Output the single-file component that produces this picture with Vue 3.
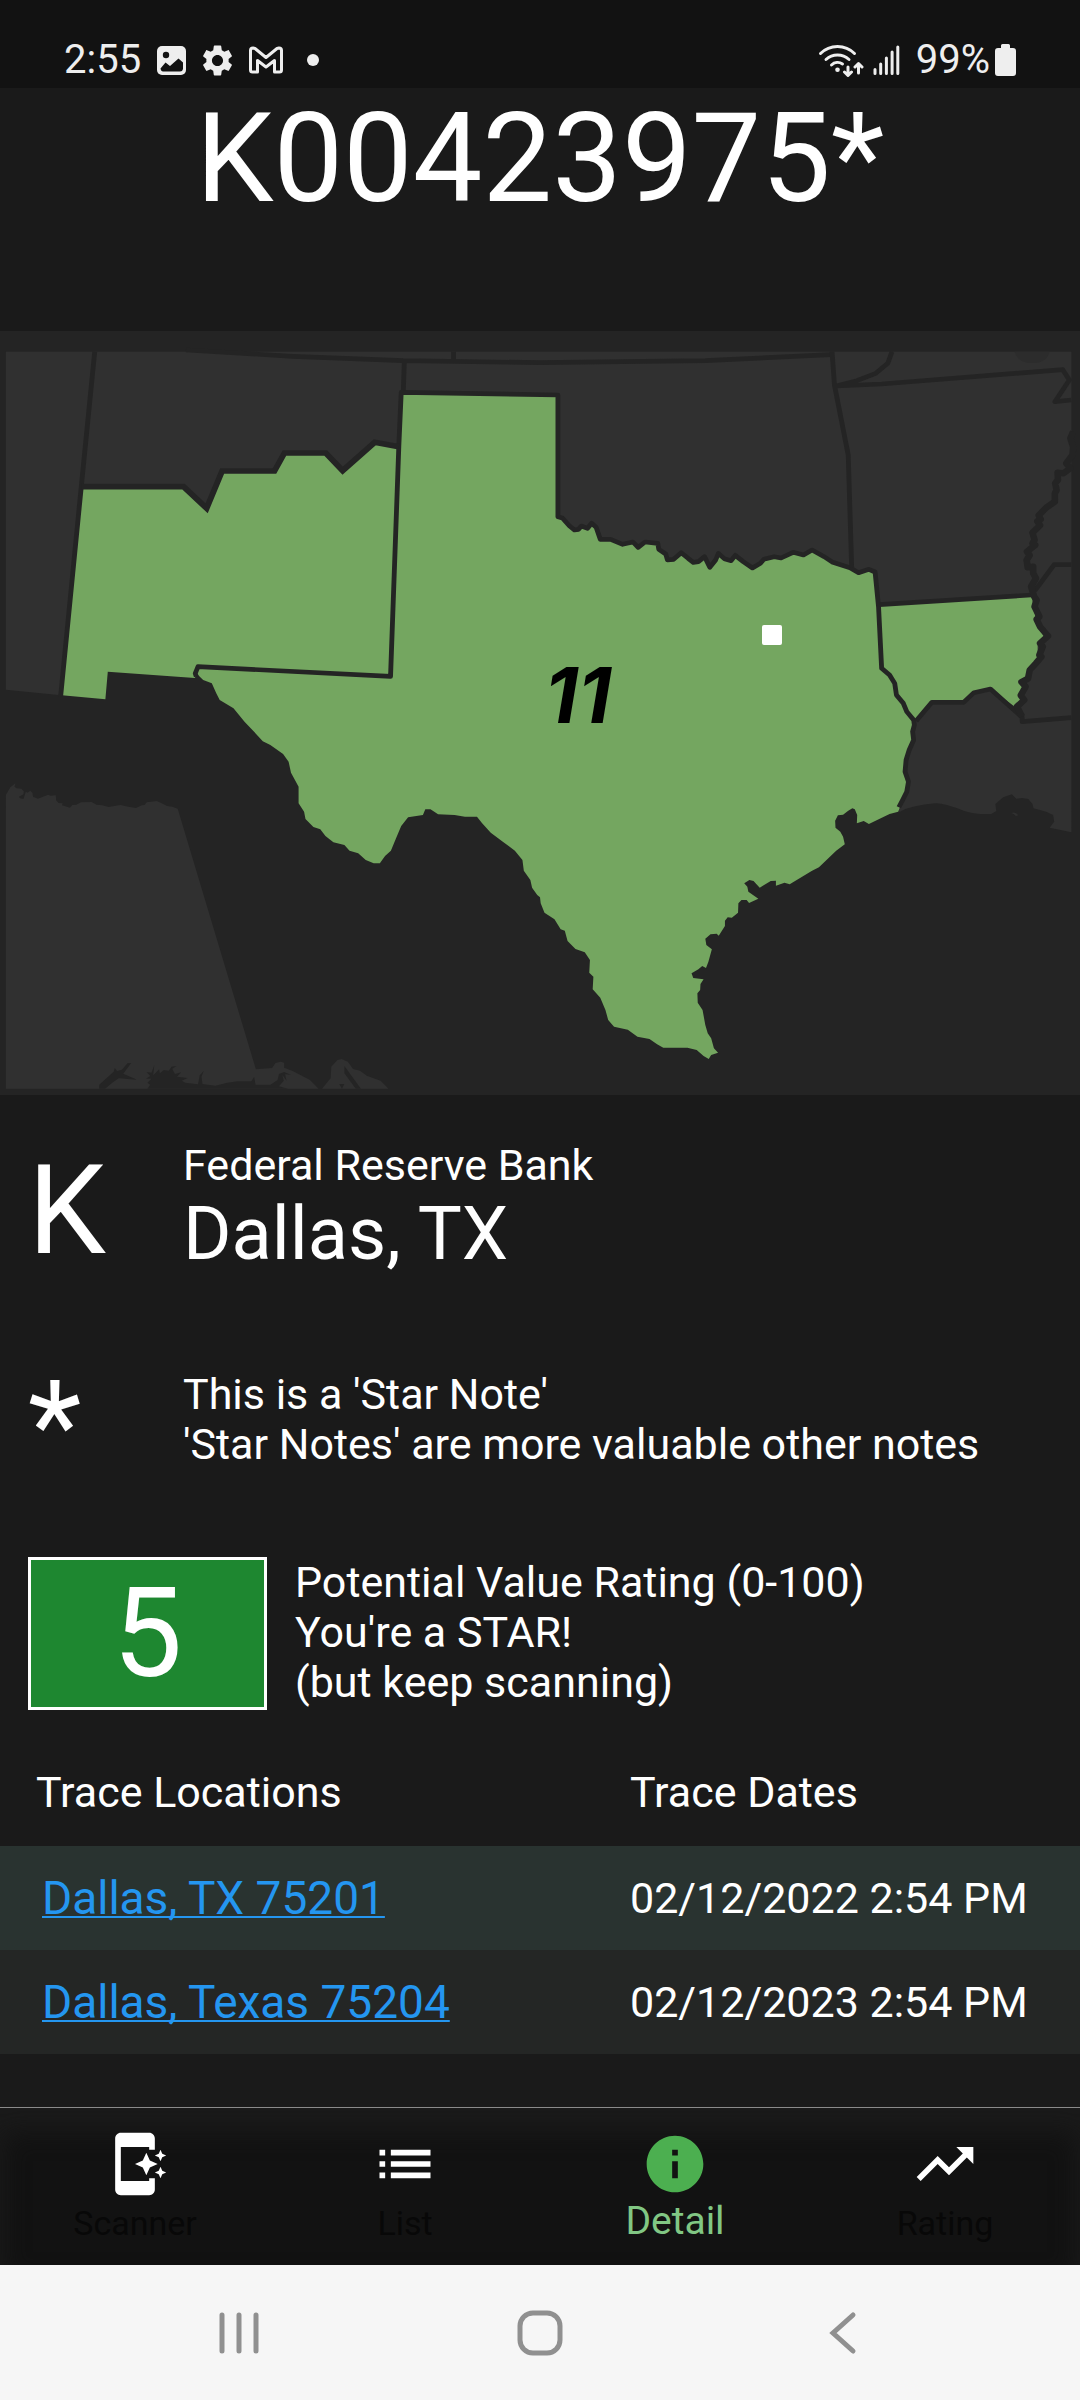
<script setup>
const traces = [
  { place: 'Dallas, TX 75201', date: '02/12/2022 2:54 PM' },
  { place: 'Dallas, Texas 75204', date: '02/12/2023 2:54 PM' },
]

const tabs = [
  {
    label: 'Scanner',
    icon: 'M17 18H7V6h10v1h2V3c0-1.100-.9-2-2-2H7C5.900 1 5 1.900 5 3v18c0 1.100.9 2 2 2h10c1.100 0 2-.9 2-2v-4h-2zM16 16l-1.250-2.750L12 12l2.750-1.250L16 8l1.250 2.750L20 12l-2.750 1.250zM21 11l-.62-1.380L19 9l1.380-.62L21 7l.62 1.380L23 9l-1.380.62zM21 17l-.62-1.380L19 15l1.380-.62L21 13l.62 1.380L23 15l-1.380.62z',
  },
  {
    label: 'List',
    icon: 'M3 13h2v-2H3zm0 4h2v-2H3zm0-8h2V7H3zm4 4h14v-2H7zm0 4h14v-2H7zM7 7v2h14V7z',
  },
  {
    label: 'Detail',
    active: true,
    icon: 'M12 2C6.480 2 2 6.480 2 12s4.480 10 10 10 10-4.480 10-10S17.520 2 12 2zm1 15h-2v-6h2zm0-8h-2V7h2z',
  },
  {
    label: 'Rating',
    icon: 'M16 6l2.290 2.290-4.880 4.880-4-4L2 16.590 3.410 18l6-6 4 4 6.300-6.290L22 12V6z',
  },
]
</script>

<template>
  <div class="screen">
    <header class="status">
      <div class="status-side">
        <span class="status-text">2:55</span>
        <svg class="st-img" viewBox="0 0 29 29" aria-hidden="true">
          <rect width="29" height="29" rx="5" />
          <g class="cut">
            <circle cx="9" cy="9" r="3.200" />
            <path d="M3.500 22.500l5-6 4.500 3.500 8.500-7.500 4.500 4v6.500q-.5 2.500-3 2.500H6q-2 0-2.500-3z" />
          </g>
        </svg>
        <svg class="st-gear" viewBox="2 2 20 20" aria-hidden="true">
          <path fill-rule="evenodd" d="M19.140 12.940c.04-.3.06-.61.06-.94 0-.32-.02-.64-.07-.94l2.030-1.580c.18-.14.23-.41.12-.61l-1.920-3.320c-.12-.22-.37-.29-.59-.22l-2.390.96c-.5-.38-1.030-.7-1.620-.94l-.36-2.540c-.04-.24-.24-.41-.48-.41h-3.840c-.24 0-.43.17-.47.41l-.36 2.540c-.59.24-1.130.57-1.620.94l-2.390-.96c-.22-.08-.47 0-.59.22L2.740 8.870c-.12.21-.08.47.12.61l2.030 1.580c-.05.3-.09.63-.09.94s.02.64.07.94l-2.030 1.580c-.18.14-.23.41-.12.61l1.920 3.320c.12.22.37.29.59.22l2.390-.96c.5.38 1.030.7 1.620.94l.36 2.540c.05.24.24.41.48.41h3.840c.24 0 .44-.17.47-.41l.36-2.540c.59-.24 1.130-.56 1.620-.94l2.390.96c.22.08.47 0 .59-.22l1.920-3.320c.12-.22.07-.47-.12-.61zM12 15.600c-1.980 0-3.600-1.620-3.600-3.600s1.620-3.600 3.600-3.600 3.600 1.620 3.600 3.600-1.620 3.600-3.600 3.600z" />
        </svg>
        <svg class="st-mail" viewBox="0 0 34 28" aria-hidden="true">
          <path class="line" d="M1.500 4.500Q1.500 2 4 2l2 .5 11 9 11-9 2-.5q2.500 0 2.500 2.500V24q0 2-2 2h-5V14.500l-8.500 6.500-8.500-6.500V26h-5q-2 0-2-2z" />
        </svg>
        <span class="dot"></span>
      </div>
      <div class="status-side right">
        <svg class="st-wifi" viewBox="0 0 46 34" aria-hidden="true">
          <g class="line">
            <path d="M2.500 10.500A24 24 0 0 1 36.500 10.500M8 16.500A17 17 0 0 1 31 16.500M13.500 22A9 9 0 0 1 24.500 21" />
            <path d="M30 24v7M26.500 29l3.500 3.500 3.500-3.500M40.500 30v-8M37 24l3.500-3.500L44 24" />
          </g>
          <circle cx="19.500" cy="26.800" r="2.300" />
        </svg>
        <svg class="st-signal" viewBox="0 0 28 30" aria-hidden="true">
          <path class="line" d="M2 24.500v4M7.700 19v9.500M13.400 13v15.500M19.100 7v21.500M24.800 2v26.500" />
        </svg>
        <span class="status-text">99%</span>
        <svg class="st-battery" viewBox="0 0 21 32" aria-hidden="true">
          <path d="M6 1.500Q6 0 7.500 0h6Q15 0 15 1.500V4h3q3 0 3 3v22q0 3-3 3H3q-3 0-3-3V7q0-3 3-3h3z" />
        </svg>
      </div>
    </header>

    <main class="content">
      <h1 class="serial">K00423975*</h1>

      <svg class="map" viewBox="0 0 1080 764" role="img" aria-label="Map of Federal Reserve district 11">
        <g transform="translate(0 -1) scale(.34439 .33333)">
          <!-- United States land -->
          <path class="land" d="M17 65H3111V1507L3048 1493 3061 1475 3058 1455 3038 1445 3001 1435 2998 1422 2986 1407 2968 1404 2951 1406 2938 1393 2913 1402 2890 1422 2893 1443 2878 1452Q2830 1454 2800 1443 2740 1418 2715 1420 2650 1425 2613 1445L1200 1000 600 900 240 900 170 1095 17 1079z" />
          <path class="land" d="M2936 1449q14-5 20 7l-6 2q-6-8-14-9z" />
          <path class="faint" d="M2946 65q8 33 50 34t52-34z" />
          <!-- Mexico -->
          <path class="land" d="M17 1395L30 1372 45 1360 42 1370 48 1375 62 1376 69 1384 68 1393 55 1400 58 1405 68 1407 75 1385 80 1388 88 1382 94 1388 96 1400 110 1406 140 1394 146 1397 162 1396 163 1411 170 1419 182 1420 180 1426 203 1433 210 1425 222 1424 235 1417 266 1416 280 1424 297 1426 315 1431 350 1425 372 1430 395 1434 412 1426 420 1425 426 1417 455 1413 468 1419 485 1428 500 1430 516 1436 743 2218 790 2214 800 2199 815 2195 825 2198 825 2213 850 2223 900 2250 925 2276H17z" />
          <path class="land" d="M935 2276L960 2245 962 2210 980 2190 992 2187 1010 2195 1025 2217 1045 2222 1065 2237 1105 2252 1128 2276z" />
          <path class="sea" d="M288 2276V2264L330 2225 333 2214 340 2223 354 2219 370 2200 381 2199 358 2231 398 2249 345 2245 328 2257 305 2276zM428 2276L436 2264 428 2258 440 2246 424 2246 436 2238 426 2226 440 2228 448 2205 445 2236 462 2218 464 2230 476 2220 490 2222 498 2210 513 2208 500 2216 508 2232 526 2227 514 2240 545 2244 528 2252 538 2258 575 2263 580 2236 592 2222 585 2240 588 2262 625 2267 660 2258 690 2254 730 2254 738 2240 742 2264H785L806 2250 810 2232 825 2226 845 2234 828 2233 832 2252 820 2235 824 2252 810 2269 836 2276zM1000 2208L1048 2276H1033L1000 2230zM985 2262H1000L993 2276z" />

          <!-- Eleventh district -->
          <g class="district">
            <path d="M240 475H532L601 545 648 427H799L828 372H944L995 430 1089 341 1158 352 1134 1040 578 1010 566 1044 313 1025 306 1108 180 1096z" />
            <path d="M1167 187L1620 197V563L1633 564 1653 587 1668 600 1680 598 1688 588 1706 595 1718 580 1731 592 1743 628H1773L1808 643 1838 636 1853 652 1873 636 1910 640 1913 658 1933 672 1938 690 1956 688 1978 668 1998 685 2013 697 2028 695 2046 680 2061 712 2078 690 2086 670 2103 686 2123 692 2135 676 2158 695 2185 714 2208 700 2218 688 2248 680 2268 684 2303 667 2333 675 2358 660 2393 680 2418 697 2468 713 2493 728 2523 718 2541 726 2551 830 2560 1015 2583 1035 2598 1060 2603 1095 2623 1120 2633 1145 2653 1170 2655 1185 2650 1205 2653 1230 2640 1260 2631 1290 2628 1325 2638 1355 2633 1385 2621 1410 2608 1445 2583 1452 2523 1482 2508 1473 2488 1480 2489 1455 2482 1438 2475 1435 2463 1442 2448 1454 2433 1456 2425 1472 2426 1493 2440 1505 2448 1520 2453 1543 2428 1562 2378 1612 2358 1622 2293 1663 2278 1658 2253 1667V1652L2238 1653 2206 1673 2188 1653 2176 1650 2161 1660 2170 1670 2173 1685 2202 1706 2175 1719 2168 1710H2153L2144 1720 2143 1748 2125 1763 2113 1762 2105 1772V1788L2087 1817 2081 1811 2063 1813 2048 1826 2051 1845 2067 1858 2057 1895 2050 1914 2039 1908 2028 1918 2008 1930 2013 1944 2043 1948 2034 1962 2033 1980 2025 1990 2026 2018 2040 2040 2048 2085 2055 2110 2065 2125 2073 2155 2085 2168 2065 2175 2058 2187 2043 2178 2023 2160 1996 2153H1926L1908 2143 1886 2127 1851 2120 1823 2099 1783 2090 1766 2070 1758 2040 1743 2003 1721 1978 1723 1940 1711 1928 1713 1890 1698 1867 1671 1857 1648 1833 1640 1802 1628 1798 1610 1768 1581 1748 1570 1720 1568 1702 1560 1695 1545 1673 1540 1650 1521 1622 1517 1590 1495 1562 1460 1535 1425 1508 1400 1480 1385 1460 1350 1460 1320 1455 1272 1453 1250 1438H1235L1228 1455 1185 1462 1165 1488 1150 1525 1135 1562 1118 1578 1103 1600H1085L1062 1590 1040 1570 1015 1562 1000 1545 968 1537 945 1518 930 1498 910 1491 887 1467 883 1445 867 1420V1370L845 1328 838 1295 822 1272 785 1245 763 1234 735 1202 710 1175 678 1135 638 1110 628 1090 615 1060 590 1050 575 1035 567 1025 575 1010 1134 1038z" />
            <path d="M2553 825L2995 796 3003 840 3008 870 3018 895 3034 925 3013 945V985L2990 1010 2978 1040 2973 1075 2963 1110 2953 1135 2876 1078 2830 1088 2800 1115H2706L2658 1173 2633 1145 2603 1095 2598 1060 2560 1015z" />
          </g>

          <!-- State lines -->
          <g class="border">
            <path d="M275 65L236 470 176 1100M540 60L850 79 1170 92 1568 98 2048 92 2413 74M1317 65V92M1174 95L1171 187" />
            <path d="M570 1040L567 1030 571 1020 575 1010 1134 1039 1158 350 1165 187 1620 195V560L1633 564 1653 587 1668 600 1680 598 1688 588 1706 595 1718 580 1731 592 1743 628H1773L1808 643 1838 636 1853 652 1873 636 1910 640 1913 658 1933 672 1938 690 1956 688 1978 668 1998 685 2013 697 2028 695 2046 680 2061 712 2078 690 2086 670 2103 686 2123 692 2135 676 2158 695 2185 714 2208 700 2218 688 2248 680 2268 684 2303 667 2333 675 2358 660 2393 680 2418 697 2468 713 2493 728 2523 718 2541 726 2551 830 2560 1015 2583 1035 2598 1060 2603 1095 2623 1120 2633 1145 2653 1170 2655 1185 2650 1205 2653 1230 2640 1260 2631 1290 2628 1325 2638 1355 2633 1385 2621 1410 2610 1432" />
            <path d="M2416 65L2423 165 2463 375 2473 713M2590 65L2578 100 2543 130 2488 152 2428 168 2560 162 3086 119 3105 150 3063 215 3111 210M2553 824L2995 795M2660 1173L2706 1117H2798L2828 1088 2876 1077 2968 1162V1175L3111 1163M3005 782L3061 704H3111" />
            <path class="ridge" d="M236 470H533L600 535 645 423H797L826 369H946L995 422 1088 337 1158 350" />
            <path class="river" d="M3116 305L3108 325 3116 350 3114 375 3096 400 3108 415 3088 430 3071 428 3072 450 3064 460 3068 480 3063 490V515L3038 533 3016 556 3022 568 3012 574 3020 586 2998 608 3004 630 2998 640 3006 645 2982 665 2990 676 2981 690 2984 712 3000 710 3000 730 3008 745 2994 770 3003 800 3010 810 3004 830 3018 860 3010 868 3020 890 3043 918 3020 940 3028 950 3018 975 3024 980 3008 1000 2990 1020 2985 1046 2966 1056 2978 1070 2964 1096 2974 1110 2953 1130 2968 1160" />
          </g>
        </g>
        <rect class="pin" x="762" y="294" width="20" height="20" rx="2" />
        <text class="district-no" x="578" y="392" text-anchor="middle">11</text>
      </svg>

      <section class="fact">
        <span class="symbol">K</span>
        <div class="lines">
          <p>Federal Reserve Bank</p>
          <p class="city">Dallas, TX</p>
        </div>
      </section>

      <section class="fact star">
        <span class="symbol">*</span>
        <div class="lines">
          <p>This is a 'Star Note'</p>
          <p>'Star Notes' are more valuable other notes</p>
        </div>
      </section>

      <section class="rating">
        <div class="score">5</div>
        <div class="lines">
          <p>Potential Value Rating (0-100)</p>
          <p>You're a STAR!</p>
          <p>(but keep scanning)</p>
        </div>
      </section>

      <table class="traces">
        <thead>
          <tr>
            <th scope="col">Trace Locations</th>
            <th scope="col">Trace Dates</th>
          </tr>
        </thead>
        <tbody>
          <tr v-for="trace in traces" :key="trace.place">
            <td class="place"><a href="#">{{ trace.place }}</a></td>
            <td>{{ trace.date }}</td>
          </tr>
        </tbody>
      </table>
    </main>

    <nav class="tabs">
      <a v-for="tab in tabs" :key="tab.label" href="#" class="tab" :class="{ active: tab.active }">
        <svg viewBox="0 0 24 24" aria-hidden="true"><path :d="tab.icon" /></svg>
        <span>{{ tab.label }}</span>
      </a>
    </nav>

    <footer class="system">
      <button type="button" aria-label="Recent apps">
        <svg viewBox="0 0 48 48"><path d="M7 6v36M24 6v36M41 6v36" /></svg>
      </button>
      <button type="button" aria-label="Home">
        <svg viewBox="0 0 48 48"><rect x="4" y="4" width="40" height="40" rx="13" /></svg>
      </button>
      <button type="button" aria-label="Back">
        <svg viewBox="0 0 48 48"><path d="M36 6L16 24l20 18" /></svg>
      </button>
    </footer>
  </div>
</template>

<style>
body {
  margin: 0;
  background: #1a1a1a;
}
</style>

<style scoped>
.screen {
  display: flex;
  flex-direction: column;
  min-height: 100vh;
  background: #1a1a1a;
  color: #fff;
  font-family: Roboto, "Liberation Sans", sans-serif;
  font-size: 43px;
  line-height: 50px;
}

p,
h1 {
  margin: 0;
  font-weight: 400;
}

/* Status bar */
.status {
  display: flex;
  justify-content: space-between;
  padding: 32px 64px 0;
  background: #121212;
  color: #eee;
}

.status-side {
  display: flex;
  align-items: center;
  gap: 16px;
  height: 56px;
}

.status-side.right {
  gap: 9px;
}

.status-side.right .status-text {
  margin-left: 6px;
  margin-right: -4px;
}

.status-text {
  font-size: 40px;
  line-height: 48px;
}

.status svg {
  fill: #eee;
}

.status .line {
  fill: none;
  stroke: #eee;
  stroke-width: 3;
  stroke-linejoin: round;
  stroke-linecap: round;
}

.status .cut {
  fill: #121212;
}

.st-img {
  width: 29px;
  height: 29px;
}

.st-gear {
  width: 31px;
  height: 31px;
}

.st-mail {
  width: 34px;
  height: 28px;
}

.st-wifi {
  width: 46px;
  height: 34px;
}

.st-signal {
  width: 28px;
  height: 30px;
}

.st-battery {
  width: 21px;
  height: 32px;
}

.dot {
  width: 12px;
  height: 12px;
  margin-left: 8px;
  border-radius: 50%;
  background: #eee;
}

/* Content */
.content {
  flex: 1;
}

.serial {
  padding-bottom: 102px;
  font-size: 124px;
  line-height: 141px;
  text-align: center;
}

.map {
  display: block;
  width: 100%;
  background: #242424;
}

.land {
  fill: #303030;
}

.faint {
  fill: #2c2c2c;
}

.sea {
  fill: #242424;
}

.district {
  fill: #74a660;
}

.border {
  fill: none;
  stroke: #242424;
  stroke-width: 14;
  stroke-linejoin: round;
}

.border .ridge {
  stroke-width: 17;
  stroke-linejoin: miter;
}

.border .river {
  stroke-width: 19;
}

.pin {
  fill: #fff;
}

.district-no {
  fill: #000;
  font: italic 700 77px Inter, "Liberation Sans", sans-serif;
}

.fact {
  display: flex;
  align-items: flex-start;
  padding: 43px 28px 0;
}

.fact .lines {
  padding-top: 2px;
}

.symbol {
  width: 155px;
  font-size: 124px;
  line-height: 145px;
}

.city {
  font-size: 74px;
  line-height: 87px;
}

.star {
  padding-top: 71px;
}

.star .lines {
  padding-top: 15px;
}

.rating {
  display: flex;
  gap: 28px;
  padding: 58px 28px 0;
}

.score {
  box-sizing: border-box;
  width: 239px;
  border: 3px solid #fff;
  background: #1e8730;
  font-size: 124px;
  line-height: 147px;
  text-align: center;
}

.traces {
  width: 100%;
  margin-top: 32px;
  border-collapse: collapse;
  table-layout: fixed;
}

.traces tr {
  height: 104px;
}

.traces th,
.traces td {
  padding: 0;
  font-weight: 400;
  text-align: left;
}

.traces th {
  padding-bottom: 4px;
}

.traces th:first-child {
  width: 55%;
  padding-left: 36px;
}

.traces .place {
  padding-left: 42px;
}

.traces tbody tr:nth-child(odd) {
  background: #293330;
}

.traces tbody tr:nth-child(even) {
  background: #242625;
}

.traces a {
  color: #2496f0;
  font-size: 46px;
  line-height: 54px;
  text-decoration: underline 2px;
  text-decoration-skip-ink: none;
  text-underline-offset: 2px;
}

/* Tab bar */
.tabs {
  display: flex;
  height: 157px;
  border-top: 1px solid #8a8a8a;
  background: #121212;
  box-shadow: inset 0 20px 24px 4px #1a1a1a;
}

.tab {
  display: flex;
  flex: 1;
  flex-direction: column;
  align-items: center;
  padding-top: 22px;
  color: #080808;
  font-size: 34px;
  line-height: 50px;
  text-decoration: none;
}

.tab svg {
  width: 68px;
  height: 68px;
  fill: #fff;
}

.tab.active {
  color: #81c784;
  font-size: 39px;
  line-height: 46px;
}

.tab.active svg {
  fill: #4caf50;
}

/* System navigation */
.system {
  display: flex;
  height: 135px;
  padding: 0 88px;
  background: #f6f6f6;
}

.system button {
  display: flex;
  flex: 1;
  align-items: center;
  justify-content: center;
  padding: 0;
  border: 0;
  background: none;
}

.system svg {
  width: 48px;
  height: 48px;
  fill: none;
  stroke: #909090;
  stroke-width: 5;
  stroke-linecap: round;
}
</style>
